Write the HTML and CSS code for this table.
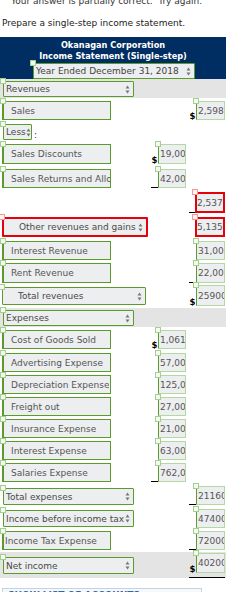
FILE: index.html
```html
<!DOCTYPE html>
<html>
<head>
<meta charset="utf-8">
<link rel="stylesheet" href="styles.css">
</head>
<body>
<div class="msg">Your answer is partially correct.&nbsp; Try again.</div>
<p class="prompt">Prepare a single-step income statement.</p>

<div class="sheet">
  <div class="head">
    <div class="title">Okanagan Corporation</div>
    <div class="title">Income Statement (Single-step)</div>
    <div class="sel sel-year">Year Ended December 31, 2018<svg class="arr" viewBox="0 0 5 9" width="5" height="9"><path d="M0.5 3.5L2.5 0.5L4.5 3.5Z M0.5 5.5L2.5 8.5L4.5 5.5Z"/></svg></div>
  </div>

  <div class="row band">
    <div class="sel w131">Revenues<svg class="arr" viewBox="0 0 5 9" width="5" height="9"><path d="M0.5 3.5L2.5 0.5L4.5 3.5Z M0.5 5.5L2.5 8.5L4.5 5.5Z"/></svg></div>
  </div>

  <div class="row">
    <div class="lab"><span class="t">Sales</span></div>
    <div></div>
    <div class="amt c2"><span class="cur">$</span><div class="box"><span class="v">2,598</span></div></div>
  </div>

  <div class="row h16 mt4">
    <div class="less"><div class="sel w29">Less<svg class="arr" viewBox="0 0 5 9" width="5" height="9"><path d="M0.5 3.5L2.5 0.5L4.5 3.5Z M0.5 5.5L2.5 8.5L4.5 5.5Z"/></svg></div><span class="colon">:</span></div>
  </div>

  <div class="row h20 mt4">
    <div class="lab"><span class="t">Sales Discounts</span></div>
    <div class="amt c1"><span class="cur">$</span><div class="box"><span class="v">19,00</span></div></div>
    <div></div>
  </div>

  <div class="row mt5">
    <div class="lab"><span class="t">Sales Returns and Allowances</span></div>
    <div class="amt c1"><span class="cur ul"></span><div class="box"><span class="v">42,00</span></div></div>
    <div></div>
  </div>

  <div class="row h21 mt4">
    <div></div>
    <div></div>
    <div class="amt c2 red"><span class="cur ul"></span><div class="box err"><span class="v">2,537</span></div></div>
  </div>

  <div class="row h20 mt4">
    <div class="sel w146 err ind">Other revenues and gains<svg class="arr" viewBox="0 0 5 9" width="5" height="9"><path d="M0.5 3.5L2.5 0.5L4.5 3.5Z M0.5 5.5L2.5 8.5L4.5 5.5Z"/></svg></div>
    <div></div>
    <div class="amt c2 red"><span class="cur"></span><div class="box err"><span class="v">5,135</span></div></div>
  </div>

  <div class="row mt4">
    <div class="lab"><span class="t">Interest Revenue</span></div>
    <div></div>
    <div class="amt c2"><span class="cur"></span><div class="box"><span class="v">31,00</span></div></div>
  </div>

  <div class="row h20">
    <div class="lab"><span class="t">Rent Revenue</span></div>
    <div></div>
    <div class="amt c2"><span class="cur ul"></span><div class="box"><span class="v">22,00</span></div></div>
  </div>

  <div class="row h21 mt2">
    <div class="sel w144 ind2 tot">Total revenues<svg class="arr" viewBox="0 0 5 9" width="5" height="9"><path d="M0.5 3.5L2.5 0.5L4.5 3.5Z M0.5 5.5L2.5 8.5L4.5 5.5Z"/></svg></div>
    <div></div>
    <div class="amt c2"><span class="cur">$</span><div class="box"><span class="v">25900</span></div></div>
  </div>

  <div class="row band mt2">
    <div class="sel w131">Expenses<svg class="arr" viewBox="0 0 5 9" width="5" height="9"><path d="M0.5 3.5L2.5 0.5L4.5 3.5Z M0.5 5.5L2.5 8.5L4.5 5.5Z"/></svg></div>
  </div>

  <div class="row">
    <div class="lab"><span class="t">Cost of Goods Sold</span></div>
    <div class="amt c1"><span class="cur">$</span><div class="box"><span class="v">1,061</span></div></div>
    <div></div>
  </div>

  <div class="row mt4">
    <div class="lab"><span class="t">Advertising Expense</span></div>
    <div class="amt c1"><span class="cur"></span><div class="box"><span class="v">57,00</span></div></div>
    <div></div>
  </div>

  <div class="row">
    <div class="lab"><span class="t">Depreciation Expense</span></div>
    <div class="amt c1"><span class="cur"></span><div class="box"><span class="v">125,0</span></div></div>
    <div></div>
  </div>

  <div class="row">
    <div class="lab"><span class="t">Freight out</span></div>
    <div class="amt c1"><span class="cur"></span><div class="box"><span class="v">27,00</span></div></div>
    <div></div>
  </div>

  <div class="row">
    <div class="lab"><span class="t">Insurance Expense</span></div>
    <div class="amt c1"><span class="cur"></span><div class="box"><span class="v">21,00</span></div></div>
    <div></div>
  </div>

  <div class="row">
    <div class="lab"><span class="t">Interest Expense</span></div>
    <div class="amt c1"><span class="cur"></span><div class="box"><span class="v">63,00</span></div></div>
    <div></div>
  </div>

  <div class="row">
    <div class="lab"><span class="t">Salaries Expense</span></div>
    <div class="amt c1"><span class="cur ul"></span><div class="box"><span class="v">762,0</span></div></div>
    <div></div>
  </div>

  <div class="row mt4">
    <div class="sel w131 tot2">Total expenses<svg class="arr" viewBox="0 0 5 9" width="5" height="9"><path d="M0.5 3.5L2.5 0.5L4.5 3.5Z M0.5 5.5L2.5 8.5L4.5 5.5Z"/></svg></div>
    <div></div>
    <div class="amt c2"><span class="cur ul"></span><div class="box"><span class="v">21160</span></div></div>
  </div>

  <div class="row mt4">
    <div class="sel w131 tot3">Income before income tax<svg class="arr" viewBox="0 0 5 9" width="5" height="9"><path d="M0.5 3.5L2.5 0.5L4.5 3.5Z M0.5 5.5L2.5 8.5L4.5 5.5Z"/></svg></div>
    <div></div>
    <div class="amt c2"><span class="cur"></span><div class="box"><span class="v">47400</span></div></div>
  </div>

  <div class="row">
    <div class="lab flush"><span class="t">Income Tax Expense</span></div>
    <div></div>
    <div class="amt c2"><span class="cur ul"></span><div class="box"><span class="v">72000</span></div></div>
  </div>

  <div class="row band net mt2">
    <div class="sel w131 netsel">Net income<svg class="arr" viewBox="0 0 5 9" width="5" height="9"><path d="M0.5 3.5L2.5 0.5L4.5 3.5Z M0.5 5.5L2.5 8.5L4.5 5.5Z"/></svg></div>
    <div></div>
    <div class="amt c2 dbl"><span class="cur">$</span><div class="box"><span class="v">40200</span></div></div>
  </div>
</div>

<div class="accounts"><span>SHOW LIST OF ACCOUNTS</span></div>
</body>
</html>
```

FILE: styles.css
```css
* { box-sizing: border-box; }

body {
  margin: 0;
  width: 248px;
  overflow: hidden;
  font-family: "DejaVu Sans", Verdana, sans-serif;
  font-size: 9px;
  color: #333;
  background: #fff;
}

.msg {
  margin-top: -5px;
  padding-left: 11px;
  line-height: 12px;
  height: 12px;
  color: #333;
}

.prompt {
  margin: 10px 0 8px 2px;
  line-height: 12px;
  color: #222;
}

.sheet { width: 226px; }

.head {
  background: #002d62;
  color: #fff;
  height: 42px;
  padding-top: 3px;
  text-align: center;
}

.title {
  font-weight: bold;
  font-size: 8.2px;
  line-height: 11px;
  white-space: nowrap;
}

/* select-like dropdown */
.sel {
  position: relative;
  display: flex;
  align-items: center;
  height: 16px;
  background: #eceeef;
  border: 1px solid #5b9b2b;
  border-radius: 1px;
  padding-left: 2px;
  color: #4a4a4a;
  white-space: nowrap;
  text-align: left;
}
.sel .arr {
  margin-left: auto;
  margin-right: 3px;
  flex: none;
  fill: #777;
}
.sel::before,
.lab::before,
.box::before {
  content: "";
  position: absolute;
  left: -4px;
  top: -4px;
  width: 4px;
  height: 4px;
  border: 1px solid #a4d08f;
  background: #f4faf1;
}

.sel-year {
  width: 162px;
  margin: 1px 0 0 33px;
  color: #444;
}

.w131 { width: 131px; margin-left: 3px; }
.w29 { width: 29px; margin-left: 3px; }
.w146 { width: 146px; margin-left: 2px; }
.w144 { width: 144px; margin-left: 2px; }

.ind { padding-left: 15px; }
.ind2 { padding-left: 15px; }

.sel.err {
  border: 2px solid #e6000a;
  height: 20px;
}
.sel.err::before,
.box.err::before {
  left: -5px;
  top: -5px;
  border-color: #f39a9a;
  background: #fff2f2;
}

.tot { margin-top: 2px; height: 18px; }
.tot2 { margin-top: 2px; height: 17px; }
.tot3 { margin-top: 1px; height: 17px; }
.netsel { margin-top: 4px; height: 17px; }

/* rows */
.row {
  display: grid;
  grid-template-columns: 151px 38px 37px;
  height: 19px;
  margin-top: 3px;
  align-items: start;
}
.row > * { grid-row: 1; }
.row.h16 { height: 16px; }
.row.h20 { height: 20px; }
.row.h21 { height: 21px; }
.row.mt2 { margin-top: 2px; }
.row.mt4 { margin-top: 4px; }
.row.mt5 { margin-top: 5px; }

.row.band {
  background: #e4e4e4;
  height: 19px;
  padding-top: 2px;
}
.row.band.mt2 { margin-top: 2px; }
.row.net {
  height: 26px;
  padding-top: 1px;
}
.row:first-of-type { margin-top: 0; }
.head + .row { margin-top: 0; }

/* label input */
.lab {
  position: relative;
  display: flex;
  align-items: center;
  width: 109px;
  height: 100%;
  margin-left: 2px;
  padding-left: 7px;
  background: #eceef0;
  border: 1px solid #5b9b2b;
  border-left-width: 2px;
  color: #555;
}
.lab.flush { padding-left: 1px; }
.lab .t {
  overflow: hidden;
  white-space: nowrap;
  min-width: 0;
}

.less {
  display: flex;
  align-items: flex-end;
  height: 100%;
}
.less .sel { height: 16px; }
.colon {
  margin-left: 2px;
  line-height: 9px;
  color: #333;
}

/* amount cells */
.amt {
  display: flex;
  height: 100%;
  align-items: stretch;
}
.cur {
  width: 7px;
  flex: none;
  display: flex;
  align-items: flex-end;
  justify-content: center;
  color: #000;
  font-weight: bold;
  font-size: 8.5px;
  line-height: 8px;
}
.cur.ul { border-bottom: 1px solid #000; }

.box {
  position: relative;
  display: flex;
  align-items: center;
  height: 100%;
  background: #eceef0;
  border: 1px solid #b3d8a3;
  border-left: 1px solid #5b9b2b;
  padding-left: 1px;
  color: #555;
}
.c1 .box { width: 28px; }
.c2 .box { width: 29px; }
.box .v {
  overflow: hidden;
  white-space: nowrap;
  min-width: 0;
}
.red .cur { width: 6px; }
.box.err {
  width: 30px;
  border: 2px solid #e6000a;
  padding-left: 0;
}

.amt.dbl {
  height: 25px;
  border-bottom: 1px solid #000;
  width: 36px;
  align-items: flex-start;
}
.amt.dbl .cur,
.amt.dbl .box { height: 20px; }

.accounts {
  margin: 10px 0 0 2px;
  width: 200px;
  border: 1px solid #c7d2df;
  background: #f6f9fc;
  padding: 1px 5px 4px;
  color: #2f65b4;
  font-weight: bold;
  font-size: 9px;
  line-height: 11px;
}
```
